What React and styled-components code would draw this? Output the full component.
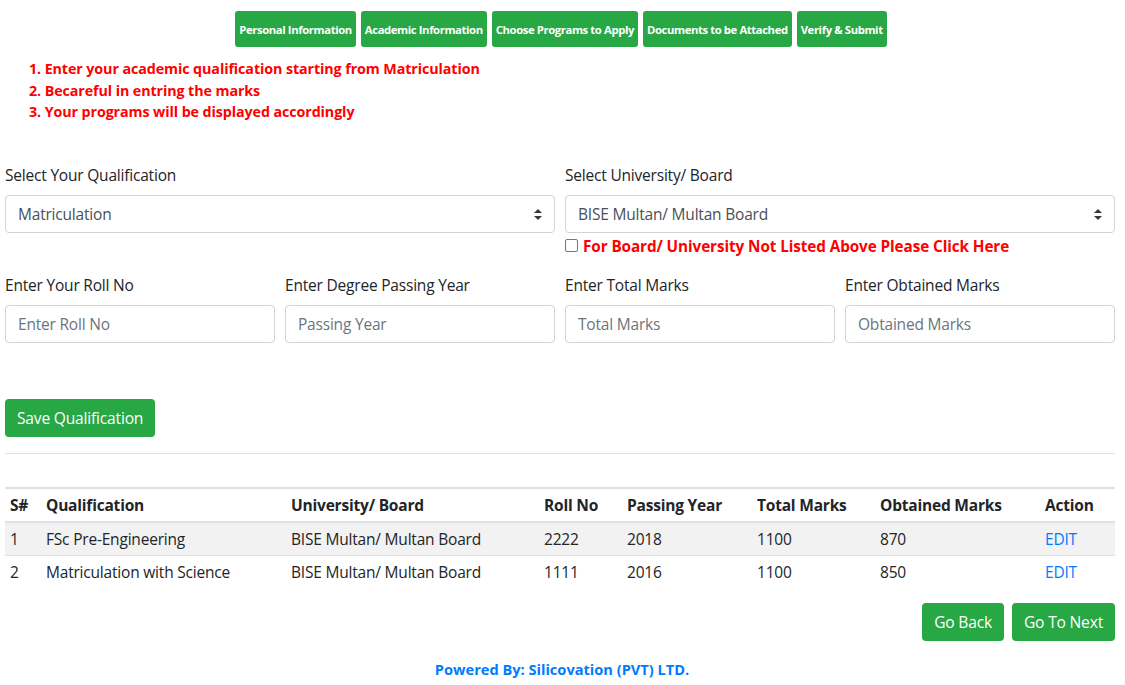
import React from 'react';
import styled, { createGlobalStyle } from 'styled-components';

const GlobalStyle = createGlobalStyle`
  body {
    margin: 0;
    background: #fff;
    font-family: "Open Sans", "Noto Sans", sans-serif;
    color: #212529;
  }
  * { box-sizing: border-box; }
`;

const Page = styled.div`
  width: 1125px;
  padding: 11px 10px 0 5px;
`;

const StepBar = styled.div`
  display: flex;
  justify-content: center;
  gap: 5px;
  padding-left: 2px;
`;

const StepButton = styled.button`
  height: 36px;
  padding: 0 4px;
  background: #28a745;
  color: #fff;
  border: none;
  border-radius: 3px;
  font-family: "Open Sans", sans-serif;
  font-weight: 700;
  font-size: 11.3px;
  letter-spacing: -0.4px;
`;

const Notes = styled.ol`
  margin: 11px 0 0;
  padding-left: 24px;
  list-style: none;
  color: #f00;
  font-weight: 700;
  font-size: 14.3px;
  line-height: 21.5px;
  letter-spacing: -0.1px;
`;

const FormRow = styled.div`
  display: grid;
  grid-template-columns: repeat(${p => p.cols}, 1fr);
  column-gap: 10px;
  margin-top: ${p => p.top}px;
`;

const Field = styled.div`
  display: flex;
  flex-direction: column;
`;

const Label = styled.label`
  font-size: 15.5px;
  line-height: 22px;
  margin-bottom: 9px;
  letter-spacing: -0.2px;
`;

const Control = styled.div`
  position: relative;
  height: 38px;
  border: 1px solid #ced4da;
  border-radius: 4px;
  display: flex;
  align-items: center;
  padding: 0 12px;
  font-size: 15.5px;
  letter-spacing: -0.2px;
  color: ${p => (p.placeholder ? '#6c757d' : '#495057')};
`;

const Arrows = styled.svg`
  position: absolute;
  right: 12px;
  top: 13px;
`;

const CheckLine = styled.div`
  display: flex;
  align-items: center;
  gap: 5px;
  margin-top: 4px;
  color: #f00;
  font-weight: 700;
  font-size: 15.3px;
  line-height: 18px;
  letter-spacing: -0.1px;
`;

const Box = styled.span`
  width: 13px;
  height: 13px;
  border: 1px solid #767676;
  border-radius: 2px;
  background: #fff;
`;

const GreenButton = styled.button`
  height: 38px;
  padding: 0 12px;
  background: #28a745;
  color: #fff;
  border: none;
  border-radius: 4px;
  font-family: "Open Sans", sans-serif;
  font-size: 15.6px;
  letter-spacing: -0.2px;
`;

const SaveWrap = styled.div`
  margin-top: 56px;
`;

const Rule = styled.hr`
  margin: 16px 0 0;
  border: none;
  border-top: 1px solid #e0e0e0;
`;

const Table = styled.table`
  margin-top: 33px;
  width: 100%;
  border-collapse: collapse;
  font-size: 15.5px;
  letter-spacing: -0.2px;
  border-top: 2px solid #dee2e6;

  th {
    text-align: left;
    font-weight: 700;
    padding: 5px 5px 4px;
    height: 34px;
    border-bottom: 2px solid #dee2e6;
  }
  td {
    padding: 5px 5px;
    height: 33px;
    border-top: 1px solid #dee2e6;
  }
  tbody tr:nth-child(odd) { background: #f2f2f2; }
`;

const Edit = styled.a`
  color: #007bff;
  text-decoration: none;
`;

const NavRow = styled.div`
  display: flex;
  justify-content: flex-end;
  gap: 8px;
  margin-top: 15px;
`;

const Footer = styled.div`
  text-align: center;
  margin-top: 18px;
  color: #007bff;
  font-weight: 700;
  font-size: 14.6px;
  padding-left: 4px;
`;

const SelectArrows = () => (
  <Arrows width="8" height="11" viewBox="0 0 8 11">
    <path d="M4 0L8 4H0Z" fill="#343a40" />
    <path d="M4 11L0 7H8Z" fill="#343a40" />
  </Arrows>
);

const rows = [
  ['1', 'FSc Pre-Engineering', 'BISE Multan/ Multan Board', '2222', '2018', '1100', '870'],
  ['2', 'Matriculation with Science', 'BISE Multan/ Multan Board', '1111', '2016', '1100', '850'],
];

const colWidths = [36, 245, 253, 83, 130, 123, 165, 75];

export default function App() {
  return (
    <Page>
      <GlobalStyle />
      <StepBar>
        <StepButton>Personal Information</StepButton>
        <StepButton>Academic Information</StepButton>
        <StepButton>Choose Programs to Apply</StepButton>
        <StepButton>Documents to be Attached</StepButton>
        <StepButton>Verify &amp; Submit</StepButton>
      </StepBar>

      <Notes>
        <li>1. Enter your academic qualification starting from Matriculation</li>
        <li>2. Becareful in entring the marks</li>
        <li>3. Your programs will be displayed accordingly</li>
      </Notes>

      <FormRow cols={2} top={41}>
        <Field>
          <Label>Select Your Qualification</Label>
          <Control>
            Matriculation
            <SelectArrows />
          </Control>
        </Field>
        <Field>
          <Label>Select University/ Board</Label>
          <Control>
            BISE Multan/ Multan Board
            <SelectArrows />
          </Control>
          <CheckLine>
            <Box />
            For Board/ University Not Listed Above Please Click Here
          </CheckLine>
        </Field>
      </FormRow>

      <FormRow cols={4} top={19}>
        <Field>
          <Label>Enter Your Roll No</Label>
          <Control placeholder="1">Enter Roll No</Control>
        </Field>
        <Field>
          <Label>Enter Degree Passing Year</Label>
          <Control placeholder="1">Passing Year</Control>
        </Field>
        <Field>
          <Label>Enter Total Marks</Label>
          <Control placeholder="1">Total Marks</Control>
        </Field>
        <Field>
          <Label>Enter Obtained Marks</Label>
          <Control placeholder="1">Obtained Marks</Control>
        </Field>
      </FormRow>

      <SaveWrap>
        <GreenButton>Save Qualification</GreenButton>
      </SaveWrap>

      <Rule />

      <Table>
        <colgroup>
          {colWidths.map((w, i) => (
            <col key={i} style={{ width: w }} />
          ))}
        </colgroup>
        <thead>
          <tr>
            <th>S#</th>
            <th>Qualification</th>
            <th>University/ Board</th>
            <th>Roll No</th>
            <th>Passing Year</th>
            <th>Total Marks</th>
            <th>Obtained Marks</th>
            <th>Action</th>
          </tr>
        </thead>
        <tbody>
          {rows.map(r => (
            <tr key={r[0]}>
              {r.map((c, i) => (
                <td key={i}>{c}</td>
              ))}
              <td>
                <Edit href="#">EDIT</Edit>
              </td>
            </tr>
          ))}
        </tbody>
      </Table>

      <NavRow>
        <GreenButton>Go Back</GreenButton>
        <GreenButton>Go To Next</GreenButton>
      </NavRow>

      <Footer>Powered By: Silicovation (PVT) LTD.</Footer>
    </Page>
  );
}
